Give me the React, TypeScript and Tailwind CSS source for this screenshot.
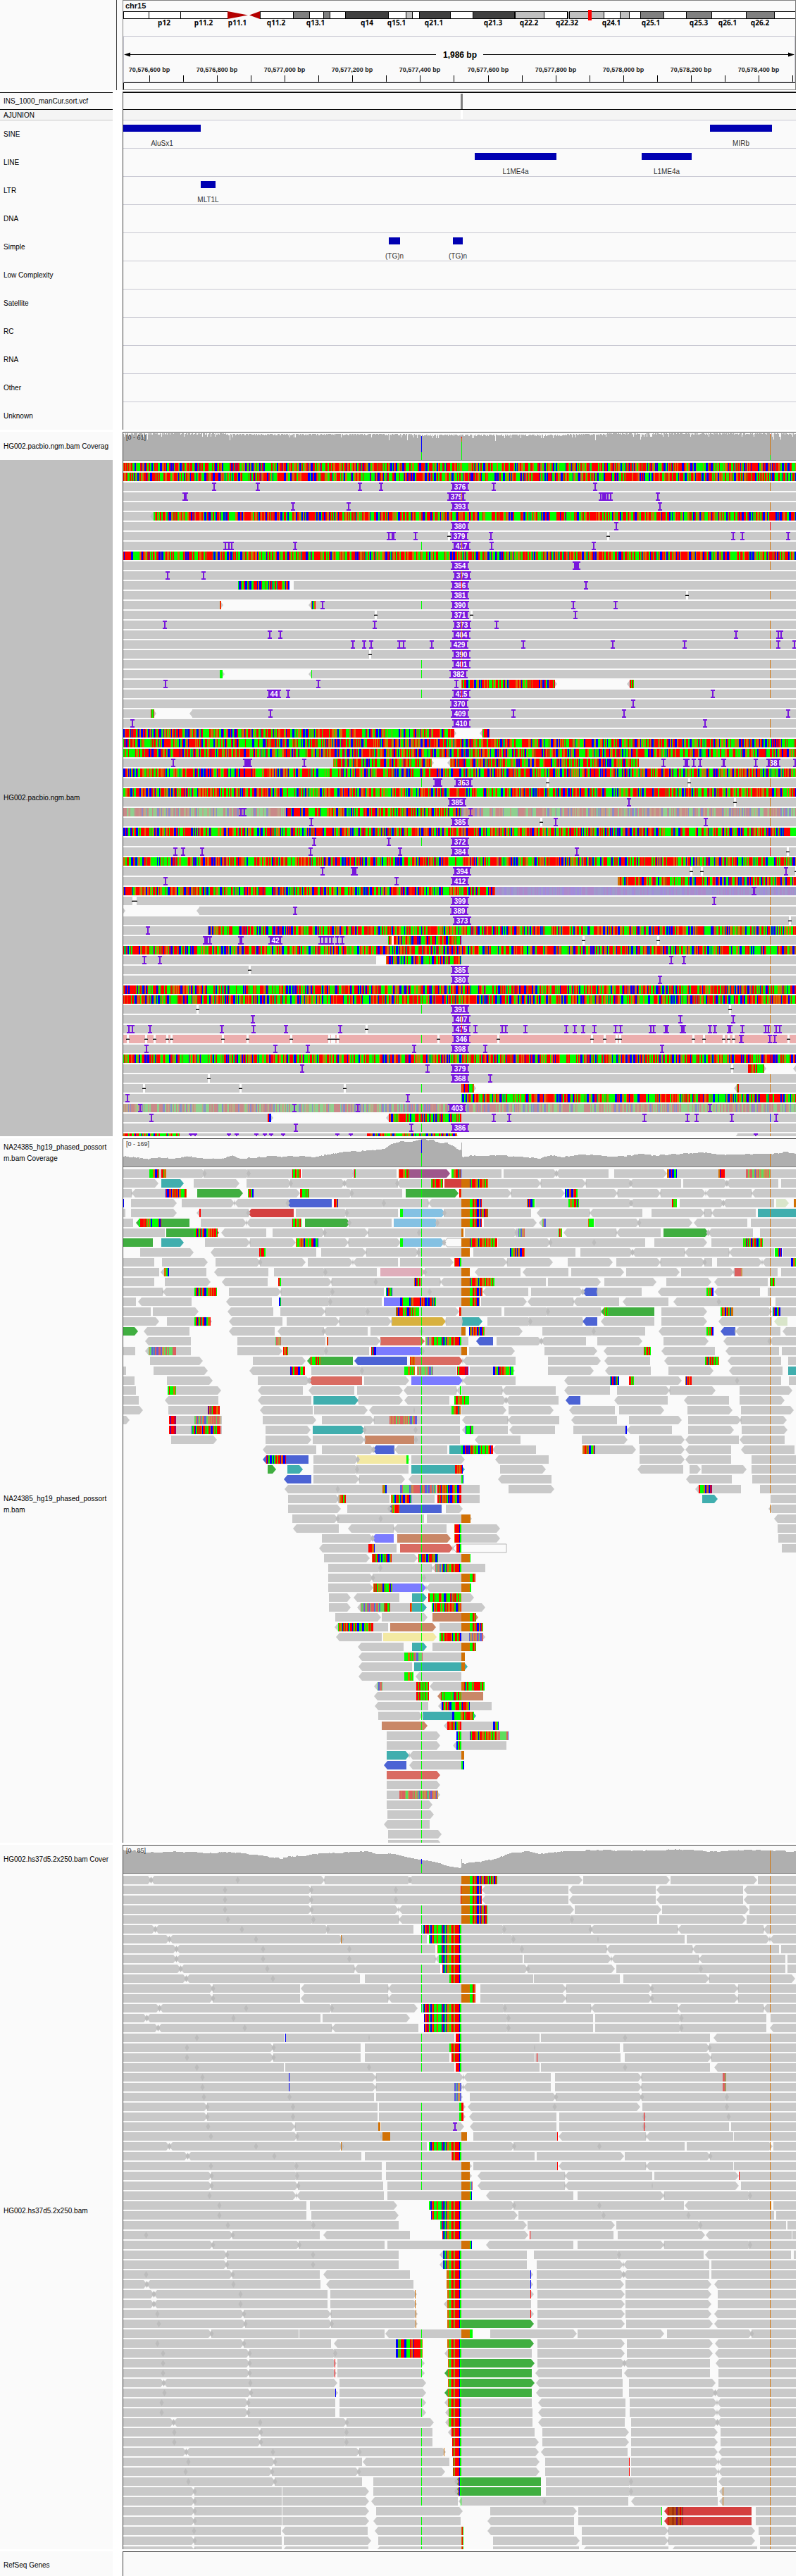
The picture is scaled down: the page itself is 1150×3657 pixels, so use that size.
import React from "react";

/* ------------------------------------------------------------------ */
/* Palette                                                             */
/* ------------------------------------------------------------------ */

const X0 = 175;
const END = 1130;
const BASE: Record<string, string> = { g: "#00ff00", r: "#ff0000", b: "#0000ff", o: "#d17105" };
const SOFT: Record<string, string> = { g: "#8fd08f", r: "#c98989", b: "#8b8bc9", o: "#bfa789" };
const MID: Record<string, string> = { g: "#5fdc5f", r: "#dc5f5f", b: "#5f5fdc", o: "#c8924f" };
const LAV: Record<string, string> = { g: "#9d99cc", r: "#ac8acb", b: "#a08cdc", o: "#a09acc" };
const READ: Record<string, string> = {
  "": "#c9c9c9",
  G: "#40ae40",
  T: "#40aeae",
  B: "#4c63d4",
  R: "#d43f3f",
  P: "#9e578c",
  S: "#84c1e3",
  K: "#dfaebb",
  C: "#d96b62",
  V: "#7b7bff",
  Y: "#f3e9a3",
  Z: "#d8b13f",
  N: "#c98767",
  L: "#d9e5ca",
};
const PURPLE = "#7816dc";

/* Clipped bases left and right of the breakpoint at x = 655 */
const LEFT_CLIP = "bgbrorrbrggbbrorggggrogggggbrbgbgbooooggorrrgorrrrrrbgg";
const RIGHT_CLIP = "ooooooooooooggggrrorgrbbboobrogobrrrgrgrbgrrgobbrrgg";

function rng(seed: number) {
  let s = (seed * 2654435761) >>> 0;
  return () => {
    s = (s + 0x6d2b79f5) >>> 0;
    let t = Math.imul(s ^ (s >>> 15), 1 | s);
    t = (t + Math.imul(t ^ (t >>> 7), 61 | t)) ^ t;
    return ((t ^ (t >>> 14)) >>> 0) / 4294967296;
  };
}

function bases(seed: number, a: number, b: number): [number, number, string][] {
  const r = rng(seed + a * 31);
  const out: [number, number, string][] = [];
  let x = a;
  let last = "";
  while (x < b) {
    let c = last;
    while (c === last) {
      const v = r();
      c = v < 0.35 ? "r" : v < 0.66 ? "g" : v < 0.82 ? "b" : "o";
    }
    const v = r();
    let w = v < 0.46 ? 1 : v < 0.74 ? 2 : v < 0.89 ? 3 : v < 0.97 ? 5 : 9;
    if (w > 3 && (c === "b" || c === "o")) w = 3;
    if (x + w > b) w = b - x;
    out.push([x, w, c]);
    x += w;
    last = c;
  }
  return out;
}

function clipped(a: number, b: number): [number, number, string][] {
  const out: [number, number, string][] = [];
  for (let x = a; x < b; x++) {
    const c = x < 655 ? LEFT_CLIP[LEFT_CLIP.length - (655 - x)] ?? "g" : RIGHT_CLIP[x - 655] ?? "r";
    out.push([x, 1, c]);
  }
  return out;
}

function Mosaic({ runs, y, h, colors }: { runs: [number, number, string][]; y: number; h: number; colors: Record<string, string> }) {
  const d: Record<string, string> = {};
  runs.forEach(([x, w, c]) => {
    d[c] = (d[c] ?? "") + `M${x} ${y}h${w}v${h}h-${w}z`;
  });
  return (
    <>
      {Object.keys(d).map((c) => (
        <path key={c} d={d[c]} fill={colors[c]} shapeRendering="crispEdges" />
      ))}
    </>
  );
}

function Insertion({ x, y, w = 2 }: { x: number; y: number; w?: number }) {
  const l = x - Math.floor(w / 2);
  return <path d={`M${l - 2} ${y}h${w + 4}v2h-2v8h2v2h-${w + 4}v-2h2v-8h-2z`} fill={PURPLE} shapeRendering="crispEdges" />;
}

function Badge({ x, y, label }: { x: number; y: number; label: string }) {
  const w = label.length === 3 ? 22 : 16;
  return (
    <>
      <Insertion x={x} y={y} w={w} />
      <text x={x} y={y + 10} textAnchor="middle" fontSize="10" fontWeight="700" fill="#fff">
        {label}
      </text>
    </>
  );
}

function Deletion({ x, y }: { x: number; y: number }) {
  return (
    <>
      <rect x={x - 1} y={y} width={3} height={12} fill="#fafafa" />
      <rect x={x - 2} y={y + 6} width={5} height={1} fill="#000" />
      <rect x={x - 2} y={y + 5} width={5} height={1} fill="#999" />
    </>
  );
}

function readPath(a: number, b: number, dir: string, y: number) {
  if (dir === ">") return b >= END ? `M${a} ${y}H${b}v12H${a}z` : `M${a} ${y}H${b - 5}L${b} ${y + 6}L${b - 5} ${y + 12}H${a}z`;
  if (dir === "<") return a <= X0 ? `M${a} ${y}H${b}v12H${a}z` : `M${a + 5} ${y}H${b}v12H${a + 5}L${a} ${y + 6}z`;
  return `M${a} ${y}H${b}v12H${a}z`;
}

const SPAN = /^([A-Za-z]?)(\d+)([-<>])(\d+)$/;

/* ------------------------------------------------------------------ */
/* Long read rows: grey background read with events                    */
/* i = insertion, I = wide insertion, b = badge, d = deletion,          */
/* m/f/l = base mosaics, w = gap, G/O/R/B/o/r = single base mismatches  */
/* ------------------------------------------------------------------ */

const LONG_ROWS = `m175-1130
m175-1130
i304 i366 i511 i541 i701 i845 b653:376 O
I263:4 b648:379 i853 I858:6 i863 i867 i934 o
i416 i495 i937 b653:393 O
<213-218 m218-1130
i875 b653:380 R
i552 I558:4 i590 d637 b652:379 i697 d863 i1041 i1054 i1119 O
i320 i325 i329 i419 G b655:417 o i698 i843 O
m175-1130
b653:354 I818:7 O
i238 i289 b656:379 o
m338-411 w411-417 b653:386 r i832
b653:381 d975 O
m312-314 w314-442 m442-448 i458 G b653:390 i814 i874
d533 b653:371 d669 i817
i234 i532 b656:373 o i705 O
i383 i398 b655:404 o i1045 i1105 i1109 O
i501 i517 i527 i567 i573 i613 b652:429 i743 i870 i972 O i1105 i1128
d525 b655:390 o
G b655:401 r O
m312-316 w316-442 m442-443 G b651:382 O
i235 i452 i648 m655-788 w788-894 m894-900 O
b389:44 i409 G b655:415 r i1012 O
b652:370 i899
m214-219 w219-273 i384 b653:409 i729 i886 i1119
i188 b655:410 i1001 O
m175-645 w645-685 m685-695 O
m175-1130
m175-1130
i246 I351:9 i432 m473-613 w613-639 m639-907 i942 I974:5 i985 i994 I1027:3 i1073 b1098:38 O i1129
m175-1130
G I621:9 b658:363 o d777 d978 O
m175-1130
b649:385 i893 d1043 O
f175-406 m406-655 f655-1130 i342 i347 i668 O
i442 b653:385 d768 i789 i1002 O
m175-1130
i446 i552 G b653:372 O
i249 i260 i287 i441 i568 b653:384 i819 R d1118
m175-1130
i458 I503:6 b656:394 d981 d996 i1116 d1130
i235 i563 b653:412 m877-1130
m175-703 l703-1130 I1070:3 O
d189 d192 b653:399 i1014 O
w175-283 i419 b652:389 O
b656:373 d1121 O
i210 m295-1130
I292:5 i298 I342:4 b391:42 i455 i460 i466 i471 i479 i486 m551-556 w556-559 m559-655 d828 d934 O
m175-1130
i205 i227 w534-548 m548-655 i953 i971 O
d354 b653:385 O
b653:380 i937 O
m175-1130
m175-1130
d280 G b653:391 d1036 O
i359 b655:407 o i966 i1041 O
i183 i188 i213 i315 i360 i406 i483 d520 b655:475 r i675 i713 i718 i746 i804 i816 i828 i844 i874 i881 i924 i928 I946:4 I969:5 i1008 i1015 I1036:4 i1054 i1087 i1091 i1102 i1107 O
p d181 d207 d219 d237 d243 d316 d351 d413 d467 d471 d474 d479 d622 G b655:346 d707 d840 d858 d875 d880 d984 d999 d1027 d1034 d1041 I1052:3 i1093 i1100 d1119
i208 i391 i437 i588 b653:398 i689 i940
m175-1130
i429 i607 b653:379 d1039 m1062-1085 w1085-1130
d296 b653:368 i696 O
d204 d341 d489 G m655-673 w673-1046 m1046-1049 O
i181 i579 m655-1130
f175-1130 i199 i418 i508 b649:403 i1008 G
i215 m380-385 w385-552 m552-655 i701 i723 i915 i976 i989 i1039 B i1102
i420 i584 G b653:386 O
m175-255 i271 i277 i325 i336 i364 i376 i385 i402 i479 i498 m521-649 w649-1047 i1073 O`.split("\n");

function LongRow({ spec, row }: { spec: string; row: number }) {
  const y = 3 + row * 14;
  const tokens = spec.split(" ");
  const tick = (x: number, fill: string) => <rect x={x} y={y} width={1} height={12} fill={fill} />;
  const background = tokens[0] === "p" ? "#ecaeae" : "#c9c9c9";
  return (
    <g>
      <rect x={X0} y={y} width={END - X0} height={12} fill={background} />
      {tokens.map((t, k) => {
        if (t === "p") return null;
        if (t === "G") return <g key={k}>{tick(598, "#00ff00")}</g>;
        if (t === "O") return <g key={k}>{tick(1093, BASE.o)}</g>;
        if (t === "R") return <g key={k}>{tick(1093, "#ff0000")}</g>;
        if (t === "B") return <g key={k}>{tick(1093, "#0000ff")}</g>;
        if (t === "o" || t === "r") return <g key={k}>{tick(655, BASE[t])}</g>;
        const kind = t[0];
        const [p, q] = t.slice(1).split(":");
        if (kind === "i") return <Insertion key={k} x={+p} y={y} />;
        if (kind === "I") return <Insertion key={k} x={+p} y={y} w={+q} />;
        if (kind === "b") return <Badge key={k} x={+p} y={y} label={q} />;
        if (kind === "d") return <Deletion key={k} x={+p} y={y} />;
        const [a, b] = t.slice(1).split("-").map(Number);
        if (kind === "w")
          return (
            <g key={k}>
              <rect x={a} y={y} width={b - a} height={12} fill="#fafafa" />
              {b - a > 16 && <path d={`M${a} ${y + 2}l3 4l-3 4z M${b} ${y + 1}l-4 5l4 5z`} fill="#c9c9c9" />}
            </g>
          );
        if (kind === "<") return <path key={k} d={`M${b} ${y}l-5 6l5 6z`} fill="#bbbbbb" />;
        const colors = kind === "f" ? SOFT : kind === "l" ? LAV : BASE;
        return <Mosaic key={k} runs={bases(row + 7, a, b)} y={y} h={12} colors={colors} />;
      })}
    </g>
  );
}

/* ------------------------------------------------------------------ */
/* Short read rows: start, direction, end                              */
/* ------------------------------------------------------------------ */

const LINKED_ROWS = `175>292 289>355 351-427 429>505 501-563 P581>639 655-712 715>791 789<864 872>947 961-1130 m212-226 m229-236 m415-427 m503-505 m566-581 m641-655 m947-961 m1020-1029 f1059-1093
175>225 T229>261 275>340 350>414 412>490 488<565 563<612 R631-655 693>768 768>832 832>898 893<967 970>1033 1031<1105 1109-1130 m612-629 q655-667 m667-693
175-187 187<265 G280>345 358>426 439>501 498-571 G576>651 655>726 726>802 820>877 877>938 938>1002 1002<1067 1067<1130 m235-265 m352-360 m426-439 m652-655 m802-820
186>251 258>333 333<410 B407<471 480>547 543-608 608<655 684-748 760-807 822>898 894<954 965>1028 1026<1099 L1102>1120 b175-176 m474-480 q655-684 m748-759 m807-822 m954-961 m1127-1130
175-178 186>251 279<353 R352<417 420>494 491-565 S572>632 630-655 691-754 762<837 837<912 925>1000 1000-1010 1010<1073 T1076-1130 m283-285 g568-572 q655-693
175-189 G193<269 285>350 350<416 G433>497 495-556 S559>623 619-655 687>762 765<835 844>908 907>983 985<1061 1066>1130 m197-229 m415-428 q655-684 f770-775 m835-843
175-234 G236-276 G305>311 314<378 387>462 460>523 523-597 593-655 660>735 732-793 800<875 875<938 G942>1006 1005<1069 1079-1130 m276-309 o655-658 f736-745 m793-798
G175-217 T229>261 291>355 355>420 452>495 495>569 S572>631 W630-705 707>782 781>846 841-916 929>1004 1010-1130 m420-452 g568-572 q655-667 m667-706 m1055-1083
199>275 299<449 456>520 520>595 593-655 672-817 824>899 897<972 972<1035 1035<1099 1111-1130 m368-377 q655-667 m724-745 m1100-1110
175-219 230>295 306>370 369>434 437>501 501<565 568>644 655>720 720>785 806>870 875>938 938>1001 1000-1011 1018>1082 1082<1130 q645-655 m1123-1130
175-226 228<293 304<381 389>464 460-535 K540>604 603-655 674<739 742<807 811>886 889>965 967>1042 1042-1104 1109-1130 m233-240 q655-667 f1043-1054
175-219 234>299 315<380 399>471 471>536 531-625 625<655 701-775 778>853 858>932 946>1010 1014<1090 1093-1130 m395-399 m588-597 q655-667 m667-702 m1093-1100
175-231 231<276 325>399 399>474 470-545 557>612 608-655 685<750 754>828 B827<848 848-911 934<1003 1014<1079 1090-1130 m276-308 m548-557 q655-685 m1003-1013
175-193 196<272 321<386 399>471 467-542 V545-568 617-655 683>748 749<814 814<879 884<949 956<1021 1020-1095 1101-1130 m396-399 m568-619 q655-681
175-214 217>282 323<388 398>462 462>524 520-562 595>652 655-712 716>780 776-853 G853<929 939>1004 1041>1096 1108-1130 m562-595 m652-655 m858-863 m1023-1041 m1097-1108
175>226 237>301 325<401 407>482 482>556 Z556>633 633-656 T656>685 692>755 751-827 B827<848 853<929 939>1004 1020<1096 L1099<1118 m276-299
G175>196 204<269 325<390 394<460 459<522 526>601 596-655 688>742 770>845 841-916 935<1003 B1023<1044 1044<1108 1111<1130 o655-661 m666-688 m1003-1013
206<271 337-398 399-462 466>540 C540>603 655-665 B676<700 705>769 768<832 848>912 942>1006 1027<1093 1092<1130 f391-399 m464-466 f604-613 q613-655
175-192 206<271 337>401 409>465 461-524 V534>601 599-655 666>731 773>848 857<924 939<1015 1030<1106 1110-1130 f211-250 m402-409 m527-534 o655-663 m914-924
213>288 359>434 G436<501 B503<578 C589>657 657<732 778>853 858<923 943<1001 1033<1109 1119-1130 m441-455 m582-589 m1001-1021
175-179 218>295 354<433 442>516 512-574 615-648 667>731 778>843 859<924 949>1013 1035<1111 T1119-1130 m412-433 m574-589 f592-615 m649-665 m700-729
175-191 237>302 366>440 C438<514 517>581 V584>657 657<732 801<866 900>968 982>1049 1044-1109 1120-1130 m866-879 m893-900 m973-982
175-193 250>314 366<430 438<503 507>572 573<648 648<655 656-713 713<789 801<866 876>951 951>1016 1050>1125 m238-250 g653-655
175-197 234<310 366<442 T445>509 509>572 574<638 666>719 718<793 B803<824 872<948 971<1035 1050>1114 m645-666
175>203 239-312 369<444 446>522 524<588 588-641 655>719 722>786 808<873 879>943 976>1040 1052>1127 m295-312 m641-654
175>184 240-315 373>449 457>531 531-592 588-653 656<721 721<794 811<876 893>968 977>1052 1052>1117 m240-250 f276-313 f553-592
240-315 377>441 T444>518 517-592 588-653 656<721 723<788 814-890 890<954 977>1042 1053>1118 m240-250 m272-313 m661-672 b888-890
243>308 377>442 444>518 N518>593 588-653 674<739 826>891 907>972 973<1049 1050<1114
373<449 457>531 B529<560 560<635 T638-655 699<761 845>903 908>972 973<1038 1052<1128 m655-700 m827-845
B373<438 445>509 Y507>582 584>660 703<779 908>972 973<1038 1067-1130 m378-406 m577-580
G380>392 T408>430 445>509 505-580 T584>660 710>775 905<970 979>995 996>1060 1067>1130 m646-657
B403<442 445>510 510>575 580<657 707<783 974<1039 1068-1130 m655-658
404<480 479-544 549-655 655-681 722>787 987<1052 1079-1130 m543-549 f568-619 m621-655 m992-1011
409>482 480-553 584-617 655-681 T997>1019 1094-1130 m482-491 m555-584 m621-655
409>484 493-555 B551<627 633>657 1091<1130 m556-567
415>480 479>543 538-602 606-655 665>670 1099<1130 o655-668
416<481 494<559 559<634 655>710 1104-1130 q645-655
457>530 V528<559 N564>640 655>710 1105-1130 q645-655
453<523 532-563 C568>643 W643<719 1110-1130 m523-532 q648-655
460>525 556>593 622-655 m528-556 m594-622 q655-668
466>542 538-613 613<689 f618-628 q628-655
466>530 529>604 600-655 q655-675
466>530 V557>605 605<655 m530-557 q655-669
467>498 502<567 T585>606 655>673 m608-655
467>498 507<582 T585>606 655>689 f512-545 m545-554 m582-585 m613-655
476>541 542>607 N614-655 N674>679 q655-676
475<551 N554>619 624-655 m480-530 q655-686
477<542 Y544>620 655>689 m624-655 f666-686
508<573 T585>606 614-655 q655-676
509<574 600-655 m574-587 f587-600 o655-660
509<585 T588-655 T659>664 o655-660
509<574 590<655 m574-587
531<592 610<655 f536-543 m591-609 o655-659 m659-688
531<592 N621<686 m591-609 m626-655
532<608 622<698 m627-667
537>600 T600-642 T671>676 m642-673
N542>607 630<700 m635-655 m700-708
549>625 655-667 m648-655 m667-705 f705-722
549>625 643<719 m648-655
T549>581 581<655 o655-659
B545<577 581<655 m655-659
C549>625
549>625
549>625 f567-622
549>614
550>616
545<610
551>627
551>627`.split("\n");

const PAIRED_ROWS = `175>461 461>584 580<655 704-1130 q655-706
175>443 441-564 560-655 684<1130 r654-655 q655-684
175>443 441-564 560-655 684<1130 r654-655 q655-684
175>443 442>566 566<655 692-1130 q655-692 G
175>447 443-566 566<655 692>814 810-933 936>1059 1060-1130 q655-692 G
175>467 464-587 655>718 714-839 838<962 962<1084 1084<1130 q600-655 G
175>487 484-606 655>731 727-849 849-972 975>1093 1093<1130 o484-485 q609-655 G
175-497 495-618 655>743 739-861 861<983 983<1106 1109-1130 q621-655 G
175-497 495-618 618<623 655-742 744>868 868<992 992<1115 1118-1130 q623-655
175-503 503<625 655>750 749>873 875>997 993-1115 1118-1130 q628-655 G
175-511 518-638 655-757 758-880 885>1007 1007>1129 q638-655 G
175-426 427<551 551<655 682>804 804>926 925>1048 1048-1130 q655-675 G
175-426 427<551 551<655 682>804 804>926 925>1048 1048-1130 q655-675 G
175>473 470>593 655>719 715-839 839<962 962<1084 1084<1130 q600-655 G
175-455 458>582 655>724 720-842 845>969 966-1088 1094-1130 q602-655
175-471 471<594 655>724 720-842 845>969 966-1088 1093<1130 q602-655
175-403 404-524 524-645 655-766 768>890 885-1008 1013<1130 b405-406 q647-655 G
175-512 518-638 655-759 759-880 885>1008 1007>1130 q638-655 G
175-512 518-638 655-759 760-881 887>1010 1010>1130 q641-655 r762-763 G
175-403 405-525 523-645 655-766 768>890 885-1008 1014<1130 q647-655 G
175-411 411>534 534>658 658<782 788>911 911-1030 1030-1130 b410-411 f1026-1031
175-411 411>534 534>658 658<782 788>911 911-1030 1030-1130 b410-411 f645-655 f1026-1031
175-413 409-531 534>657 667>790 789>912 911>1034 1030-1130 f645-655
175-418 414-536 538>661 664<788 787>909 912-1034 1030-1130 m652-658 G
175-418 414-536 538>661 666<790 794>917 912-1035 1034-1130 m652-658 r914-915 G
175>419 419-537 541>659 667<790 794>917 912-1035 1038-1130 m537-540 i646 r914-915 G
175>423 421-541 541-655 672-792 793<917 917<1041 1042-1130 o543-554 o655-663 r791-792 G
175>487 484-606 655>731 729-853 849-972 975>1097 1098-1130 o484-485 q609-655 G
175-513 518-640 655-759 762>886 887>1009 1008>1130 q641-655 G
175>423 419-542 548-655 665>670 672-791 793<917 917<1041 1042-1130 o655-667 r791-792 G
175>424 420-542 548-655 665>670 678<802 802<926 929>1049 1050-1130 o655-667 r1049-1050 G
175>424 423-544 550-655 678<802 802<926 926>1049 1052-1130 o655-667 f667-671 G
175>421 421<545 550-655 690<814 820>943 943>1067 1063-1130 q655-669 b669-670
175-435 440>564 655>731 729-853 849-971 972<1093 1098-1130 q609-655 o1093-1095
175-435 442>566 655>735 736>859 855-978 977-1099 1102-1130 q612-655
175>447 443-566 655>748 749>873 875>996 993-1116 1118-1130 q625-655
175-454 459<582 655>750 752-871 877>1001 1002<1124 1125-1130 q628-655 r752-753
175>426 424-546 550-655 690<814 820>943 943>1067 1063-1130 q655-669 b669-670
175-446 443-566 624<630 655-748 758>881 877-999 1001<1123 1127-1130 q629-655
175-446 443-566 624<630 655-748 762>885 885<1007 1010>1130 q629-655
175-454 459<582 655>757 762>886 885<1007 1010>1130 q634-655 b753-754
175-455 463<587 655>757 762>886 888>1010 1014<1130 q634-655 b753-754
175-465 469>592 655>758 763>887 888>1010 1019-1130 o589-590 q635-655 r753-754
175-465 469>592 630<636 655-754 763>887 888>1010 1019-1130 o589-590 q635-655
175>470 470>593 655>758 763>887 888>1010 1014<1130 o590-591 q635-655 r753-754
175>472 470>593 G655>758 763>887 889>1012 1014<1130 o590-591 q635-655
175-424 425-546 547<655 696>819 820>943 947>1068 1067-1130 q655-671 G
175-470 474<562 G655>758 763>887 890>1012 1015<1130 m562-600 q635-655
175>478 474-562 631<637 655-755 763>887 890>1012 1015<1130 m562-600 q636-655
175>478 479>603 G655>759 763>887 886<1008 1016<1130 r475-476 g598-599 q636-655
175>478 479>603 G631<655 G655-755 760<883 886<1008 1020-1130 r475-476 g598-599 q636-655
175>479 482>605 G655>759 761<884 893>1016 1020-1130 q636-655
175>480 482>605 G631<655 G655-755 761<884 893>1016 1015<1130 b476-477 q636-655
175-476 482>605 631<655 655-755 764<888 894>1018 1018<1130 q636-655 G
175-476 482>605 632<655 655-756 764<888 894>1018 1018<1130 q637-655 G
175>493 492>616 632<655 655-756 764<887 896>1019 1018<1130 q637-655
175>494 490-614 636<655 655-759 770>893 896>1019 1023-1130 q641-655 G
175>494 490-614 655>765 770>893 896>1019 1023-1130 q642-655 G
175>511 510>633 655>765 768<891 896>1019 1020<1130 o630-631 q642-655 G
175-514 515<638 655>766 774-893 896>1020 1020<1130 q643-655 r893-894 G
175>510 509>632 655>766 774-893 896>1020 1020<1130 q643-655 r893-894 G
175-514 530-650 G646<655 G655-768 775>898 894-1018 1020<1130 q651-655 G
175-400 401>524 530-650 G646<655 G655-768 775>898 894-1018 1021<1130 q651-655 o1026-1027 G
175-400 401>524 527<650 651<774 772-892 896<1019 1021<1130 g654-655 o1026-1027 G
175-400 401>524 534>657 696>819 821-940 R943<1067 1073-1130 g939-940 d948-970
175-400 401>524 530<654 692<815 821-940 R943<1067 1073-1130 g939-940 d948-970 G
175-399 400<522 532<655 692<815 826>949 949>1072 1077-1130 m655-658 G
175-400 403>527 537-655 700>823 826>949 949>1072 1079-1130 m655-658 G
175-400 401<523 534<655 700-822 827<949 953<1075 1079-1130 m655-658 G`.split("\n");

type Span = { c: string; a: number; b: number; dir: string };

function splitLong(s: Span): Span[] {
  if (s.b - s.a < 150) return [s];
  if (s.a === X0) {
    const cut = s.b - 123;
    const dir = cut % 2 ? ">" : "<";
    return [...splitLong({ ...s, b: cut, dir }), { ...s, a: cut - 1 }];
  }
  const cut = s.a + 123;
  return [{ ...s, b: cut, dir: s.dir === "-" ? ">" : s.dir }, ...splitLong({ ...s, a: cut + 1 })];
}

function ShortRow({ spec, row, split, seed }: { spec: string; row: number; split: boolean; seed: number }) {
  const y = 3 + row * 14;
  const reads: Span[] = [];
  const marks: Span[] = [];
  let green = false;
  let insertion = 0;
  spec.split(" ").forEach((t) => {
    if (t === "G") green = true;
    else if (/^i\d+$/.test(t)) insertion = +t.slice(1);
    else {
      const m = SPAN.exec(t);
      if (!m) return;
      const s = { c: m[1], a: +m[2], dir: m[3], b: +m[4] };
      if ("mfqdgrbo".includes(s.c) && s.c !== "") marks.push(s);
      else if (split && s.c === "") reads.push(...splitLong(s));
      else reads.push(s);
    }
  });
  if (!split) green = reads.some((r) => r.a < 598 && r.b > 599);
  const orange = reads.some((r) => r.a < 1093 && r.b > 1094);
  return (
    <g>
      {reads.map((r, k) =>
        r.c === "W" ? (
          <path key={k} d={`M${r.a + 5} ${y}H${r.b}v12H${r.a + 5}L${r.a} ${y + 6}z`} fill="#fafafa" stroke="#b4b4b4" />
        ) : (
          <path key={k} d={readPath(r.a, r.b, r.dir, y)} fill={READ[r.c]} />
        ),
      )}
      {reads.map((r, k) => {
        const n = reads[k + 1];
        if (!n || n.a > r.b || r.c === "W" || r.b === 655) return null;
        const mid = (n.a + r.b) / 2;
        const h = n.a === r.b ? 1 : 3;
        return <path key={k} d={`M${mid - h} ${y + 6}l${h} -5l${h} 5l-${h} 5z`} fill="#bcbcbc" />;
      })}
      {marks.map((m, k) => {
        if (m.c === "m") return <Mosaic key={k} runs={bases(seed, m.a, m.b)} y={y} h={12} colors={BASE} />;
        if (m.c === "f") return <Mosaic key={k} runs={bases(seed, m.a, m.b)} y={y} h={12} colors={MID} />;
        if (m.c === "q") return <Mosaic key={k} runs={clipped(m.a, m.b)} y={y} h={12} colors={BASE} />;
        if (m.c === "d")
          return (
            <Mosaic
              key={k}
              runs={bases(seed, m.a, m.b)}
              y={y}
              h={12}
              colors={{ g: "#b84a10", r: "#e00000", b: "#7a1060", o: "#8a4a10" }}
            />
          );
        return <rect key={k} x={m.a} y={y} width={m.b - m.a} height={12} fill={BASE[m.c]} />;
      })}
      {insertion > 0 && <Insertion x={insertion} y={y} />}
      {green && <rect x={598} y={y} width={1} height={12} fill="#00ff00" />}
      {orange && <rect x={1093} y={y} width={1} height={12} fill={BASE.o} />}
    </g>
  );
}

/* ------------------------------------------------------------------ */
/* Coverage                                                            */
/* ------------------------------------------------------------------ */

type Pt = [number, number];

const LINKED_COV: Pt[] = [
  [175, 24], [190, 25], [205, 28], [230, 26], [245, 27], [268, 24], [290, 27], [315, 27], [332, 23], [340, 27],
  [360, 26], [385, 24], [400, 25], [415, 24], [450, 25], [465, 21], [490, 18], [520, 16], [546, 13], [555, 6],
  [568, 3], [580, 4], [595, 0], [615, 1], [625, 6], [635, 5], [645, 11], [654, 16], [655, 25], [670, 23],
  [715, 23], [735, 25], [765, 27], [783, 23], [800, 25], [823, 21], [860, 24], [885, 24], [910, 21], [930, 23],
  [955, 21], [980, 20], [1000, 19], [1020, 22], [1045, 22], [1070, 21], [1095, 21], [1115, 18], [1130, 20],
];

const PAIRED_COV: Pt[] = [
  [175, 6], [210, 9], [250, 8], [290, 10], [330, 9], [370, 14], [400, 18], [410, 15], [430, 14], [455, 11],
  [500, 9], [520, 8], [535, 11], [560, 11], [580, 16], [600, 20], [620, 24], [640, 29], [654, 31], [655, 25],
  [680, 23], [700, 19], [715, 14], [730, 9], [750, 8], [765, 12], [780, 9], [800, 8], [840, 6], [900, 7],
  [960, 5], [1010, 8], [1060, 6], [1100, 7], [1130, 8],
];

function coveragePath(points: Pt[], seed: number) {
  const r = rng(seed);
  let d = `M${X0} 39`;
  let k = 0;
  let noise = 0;
  for (let x = X0; x < END; x++) {
    while (k < points.length - 2 && points[k + 1][0] <= x) k++;
    const [xa, ya] = points[k];
    const [xb, yb] = points[k + 1];
    if (r() < 0.25) noise = Math.round(r());
    d += `V${Math.max(0, Math.round(ya + ((yb - ya) * (x - xa)) / (xb - xa)) + noise)}H${x + 1}`;
  }
  return d + "V39z";
}

function longCoveragePath() {
  const r = rng(91);
  let d = `M${X0} 39`;
  for (let x = X0; x < END; x++) {
    const shelf = x > 320 && x < 860 ? (x > 590 && x < 800 ? 3 : 2) : 1;
    const v = r();
    const y = v < 0.5 ? shelf : v < 0.75 ? shelf + 1 : v < 0.93 ? shelf + 2 : v < 0.985 ? shelf + 5 : shelf + 9;
    d += `V${y}H${x + 1}`;
  }
  return d + "V39z";
}

type Bar = [number, number, number, string];

function Coverage({ path, range, bars }: { path: string; range: string; bars: Bar[] }) {
  return (
    <svg className="block h-[39px] w-full" role="img" aria-label={`Coverage ${range}`}>
      <g transform={`translate(-${X0} 0)`}>
        <path d={path} fill="#afafaf" shapeRendering="crispEdges" />
        {bars.map(([x, a, b, fill], k) => (
          <rect key={k} x={x} y={a} width={1} height={b - a} fill={fill} />
        ))}
        <text x={179} y={10} fontSize="9" fill="#333">
          {range}
        </text>
      </g>
    </svg>
  );
}

function Alignments({ label, children }: { label: string; children: React.ReactNode }) {
  return (
    <svg className="block h-[959px] w-full" role="img" aria-label={label}>
      <g transform={`translate(-${X0} 0)`}>{children}</g>
    </svg>
  );
}

/* ------------------------------------------------------------------ */
/* Panels                                                              */
/* ------------------------------------------------------------------ */

function Panel({ names, children, className = "" }: { names: React.ReactNode; children: React.ReactNode; className?: string }) {
  return (
    <section className={`flex w-full pr-5 ${className}`}>
      <div className="w-40 shrink-0 overflow-hidden bg-[#fafafa] whitespace-nowrap">{names}</div>
      <div className="ml-3.5 min-w-0 flex-1 overflow-hidden border-t border-l border-[#404040] bg-[#fafafa]">{children}</div>
    </section>
  );
}

function BamPanel({
  coverageName,
  name,
  selected = false,
  coverage,
  children,
}: {
  coverageName: string[];
  name: string[];
  selected?: boolean;
  coverage: React.ReactNode;
  children: React.ReactNode;
}) {
  const lines = (list: string[]) =>
    list.map((l) => (
      <div key={l} className="h-4 leading-4">
        {l}
      </div>
    ));
  return (
    <Panel
      className="h-[1000px]"
      names={
        <div className="flex h-full flex-col">
          <div className="flex h-10 flex-col justify-center pt-0.5 pl-[5px]">{lines(coverageName)}</div>
          <div className={`flex flex-1 flex-col justify-center pl-[5px] ${selected ? "bg-[#c0c0c0]" : ""}`}>{lines(name)}</div>
        </div>
      }
    >
      {coverage}
      <div className="h-px bg-[#808080]" />
      {children}
    </Panel>
  );
}

const FEATURES: { name: string; items: { from: number; to: number; label: string }[] }[] = [
  {
    name: "SINE",
    items: [
      { from: 175, to: 285, label: "AluSx1" },
      { from: 1008, to: 1096, label: "MIRb" },
    ],
  },
  {
    name: "LINE",
    items: [
      { from: 674, to: 790, label: "L1ME4a" },
      { from: 911, to: 982, label: "L1ME4a" },
    ],
  },
  { name: "LTR", items: [{ from: 285, to: 306, label: "MLT1L" }] },
  { name: "DNA", items: [] },
  {
    name: "Simple",
    items: [
      { from: 552, to: 568, label: "(TG)n" },
      { from: 643, to: 657, label: "(TG)n" },
    ],
  },
  { name: "Low Complexity", items: [] },
  { name: "Satellite", items: [] },
  { name: "RC", items: [] },
  { name: "RNA", items: [] },
  { name: "Other", items: [] },
  { name: "Unknown", items: [] },
];

const BANDS: [number, number, string][] = [
  [175, 211, "#fff"], [211, 256, "#fff"], [256, 323, "#fff"], [369, 416, "#fff"], [416, 439, "#808080"],
  [439, 459, "#fff"], [459, 468, "#808080"], [468, 490, "#fff"], [490, 551, "#404040"], [551, 576, "#fff"],
  [576, 585, "#c0c0c0"], [585, 595, "#fff"], [595, 639, "#404040"], [639, 671, "#fff"], [671, 730, "#404040"],
  [731, 772, "#c0c0c0"], [772, 805, "#fff"], [805, 806, "#000"], [808, 857, "#c0c0c0"], [857, 880, "#fff"],
  [880, 893, "#c0c0c0"], [893, 909, "#fff"], [909, 942, "#808080"], [942, 974, "#fff"], [974, 1010, "#808080"],
  [1010, 1059, "#fff"], [1059, 1099, "#808080"], [1099, 1129, "#fff"],
];

const BAND_LABELS: [number, string][] = [
  [233, "p12"], [289, "p11.2"], [337, "p11.1"], [392, "q11.2"], [448, "q13.1"], [521, "q14"], [563, "q15.1"],
  [616, "q21.1"], [700, "q21.3"], [751, "q22.2"], [805, "q22.32"], [868, "q24.1"], [924, "q25.1"], [992, "q25.3"],
  [1033, "q26.1"], [1079, "q26.2"],
];

function Header() {
  return (
    <header className="flex h-32 w-full pr-5">
      <div className="w-[166px] shrink-0 border-r border-[#404040] bg-[#fafafa]" />
      <div className="w-2 shrink-0 bg-[#fafafa]" />
      <div className="min-w-0 flex-1 border border-[#808080] bg-[#fafafa]">
        <svg className="block h-[126px] w-full" role="img" aria-label="Chromosome 15 ideogram and ruler">
          <g transform={`translate(-${X0} -1)`}>
            <text x={178} y={12} fontSize="11" fontWeight="700" fill="#111">
              chr15
            </text>
            {BANDS.map(([a, b, fill]) => (
              <rect key={a} x={a + 0.5} y={16.5} width={b - a} height={10} fill={fill} stroke="#000" />
            ))}
            <path d="M323 16L352 21.5L323 27z M369 16L354 21.5L369 27z" fill="#b40000" />
            <rect x={835} y={14} width={5} height={15} fill="#ff0000" />
            <g fontFamily="'Noto Sans', sans-serif" fontWeight="700" fontSize="10" textAnchor="middle">
              {BAND_LABELS.map(([x, t]) => (
                <text key={t} x={x} y={36}>
                  {t}
                </text>
              ))}
            </g>
            <path d="M175.5 116V51.5H1128.5V116.5H175" fill="none" stroke="#c8c8d2" />
            <path d="M178 77.5H619M686 77.5H1127" stroke="#000" />
            <path d="M176 77.5l9 -3v6z M1128 77.5l-9 -3v6z" />
            <text x={653} y={82} fontSize="12" fontWeight="700" textAnchor="middle">
              1,986 bp
            </text>
            {Array.from({ length: 20 }, (_, k) => {
              const x = Math.round(212 + k * 48.05);
              const pos = 70576600 + k * 100;
              return (
                <g key={k}>
                  <rect x={x} y={107} width={1} height={9} />
                  {k % 2 === 0 && (
                    <text x={x} y={102} fontSize="9" fontWeight="700" textAnchor="middle" fill="#222">
                      {pos.toLocaleString("en-US")} bp
                    </text>
                  )}
                </g>
              );
            })}
            <path d="M175.5 127V117.5H1129" fill="none" stroke="#000" />
          </g>
        </svg>
      </div>
    </header>
  );
}

export default function App() {
  return (
    <main className="w-full bg-white font-['Liberation_Sans',Arial,sans-serif] text-[10px] text-black">
      <Header />
      <div className="h-0.5" />

      <Panel
        className="h-[480px]"
        names={
          <>
            <div className="h-px" />
            <div className="h-[25px] border-y border-black pl-[5px] leading-6">INS_1000_manCur.sort.vcf</div>
            <div className="h-[15px] border-b border-[#c8c8c8] bg-[#f4f4f4] pl-[5px] leading-[15px]">AJUNION</div>
            {FEATURES.map((f) => (
              <div key={f.name} className="h-10 pl-[5px] leading-10">
                {f.name}
              </div>
            ))}
          </>
        }
      >
        <div className="h-[25px] border-y border-black">
          <svg className="block h-[23px] w-full" role="img" aria-label="Insertion site">
            <rect x={479} y={1} width={3} height={22} fill="#808080" />
          </svg>
        </div>
        <div className="h-[15px] border-b border-[#c8c8d2] bg-[#f4f4f4]">
          <svg className="block h-3.5 w-full" role="img" aria-label="Genotype">
            <rect x={479} y={0} width={3} height={13} fill="#fff" />
          </svg>
        </div>
        {FEATURES.map((f) => (
          <div key={f.name} className="h-10 border-b border-[#c8c8d2] last:border-b-0">
            <svg className="block h-[39px] w-full" role="img" aria-label={f.name}>
              <g transform={`translate(-${X0} 0)`}>
                {f.items.map((it) => (
                  <g key={it.from}>
                    <rect x={it.from} y={6} width={it.to - it.from} height={10} fill="#0000b2" />
                    <text x={(it.from + it.to) / 2} y={36} fontSize="10" textAnchor="middle" fill="#333">
                      {it.label}
                    </text>
                  </g>
                ))}
              </g>
            </svg>
          </div>
        ))}
      </Panel>
      <div className="h-[3px]" />

      <BamPanel
        selected
        coverageName={["HG002.pacbio.ngm.bam Coverag"]}
        name={["HG002.pacbio.ngm.bam"]}
        coverage={
          <Coverage
            path={longCoveragePath()}
            range="[0 - 61]"
            bars={[
              [598, 5, 28, "#0000ff"],
              [598, 28, 39, "#00ff00"],
              [655, 6, 8, "#ff0000"],
              [655, 8, 13, BASE.o],
              [655, 13, 39, "#00ff00"],
              [1093, 2, 3, "#ff0000"],
              [1093, 3, 32, BASE.o],
              [1093, 32, 39, "#00ff00"],
            ]}
          />
        }
      >
        <Alignments label="HG002.pacbio.ngm.bam">
          {LONG_ROWS.map((spec, k) => (
            <LongRow key={k} spec={spec} row={k} />
          ))}
        </Alignments>
      </BamPanel>
      <div className="h-[3px]" />

      <BamPanel
        coverageName={["NA24385_hg19_phased_possort", "m.bam Coverage"]}
        name={["NA24385_hg19_phased_possort", "m.bam"]}
        coverage={
          <Coverage
            path={coveragePath(LINKED_COV, 5)}
            range="[0 - 169]"
            bars={[
              [655, 5, 39, "#afafaf"],
              [598, 1, 20, "#0000ff"],
              [598, 20, 39, "#00ff00"],
              [1093, 21, 39, BASE.o],
            ]}
          />
        }
      >
        <Alignments label="NA24385 phased alignments">
          {LINKED_ROWS.map((spec, k) => (
            <ShortRow key={k} spec={spec} row={k} split={false} seed={13} />
          ))}
        </Alignments>
      </BamPanel>
      <div className="h-[3px]" />

      <BamPanel
        coverageName={["HG002.hs37d5.2x250.bam Cover"]}
        name={["HG002.hs37d5.2x250.bam"]}
        coverage={
          <Coverage
            path={coveragePath(PAIRED_COV, 8)}
            range="[0 - 85]"
            bars={[
              [655, 19, 39, "#afafaf"],
              [598, 19, 26, "#0000ff"],
              [598, 26, 39, "#00ff00"],
              [1093, 7, 39, BASE.o],
            ]}
          />
        }
      >
        <Alignments label="HG002.hs37d5.2x250.bam">
          {PAIRED_ROWS.map((spec, k) => (
            <ShortRow key={k} spec={spec} row={k} split seed={29} />
          ))}
        </Alignments>
      </BamPanel>
      <div className="h-[3px]" />

      <Panel className="h-[35px]" names={<div className="pl-[5px] leading-10">RefSeq Genes</div>}>
        <div />
      </Panel>
    </main>
  );
}
